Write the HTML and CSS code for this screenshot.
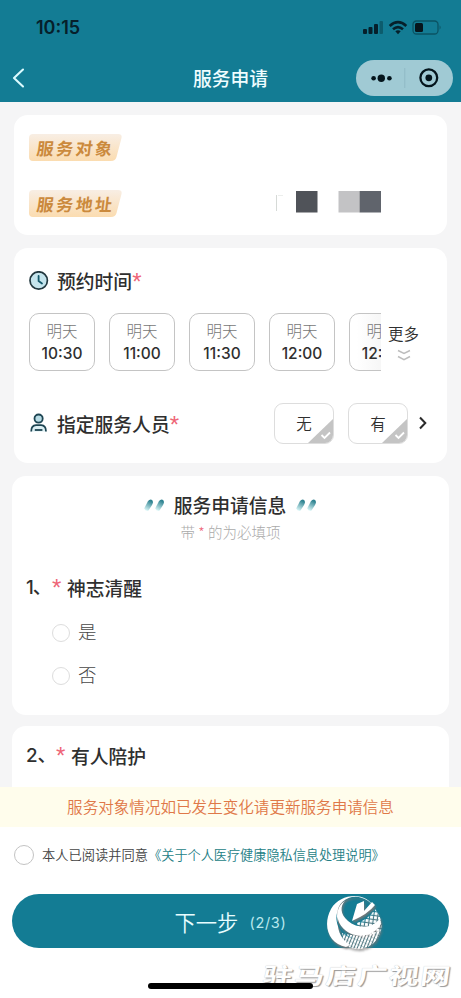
FILE: index.html
```html
<!DOCTYPE html>
<html lang="zh-CN">
<head>
<meta charset="utf-8">
<title>服务申请</title>
<link rel="stylesheet" href="styles.css">
</head>
<body>
<div class="app">
  <header class="header">
    <div class="status">
      <span class="clock">10:15</span>
      <svg class="status-icons" width="80" height="16" viewBox="0 0 80 16">
        <g fill="#06202b"><rect x="1" y="9" width="4" height="5" rx="1"/><rect x="6.5" y="7" width="4" height="7" rx="1"/><rect x="12" y="4" width="4" height="10" rx="1"/></g>
        <rect x="17.5" y="1" width="3.5" height="13" rx="1" fill="#0c5c6d"/>
        <g fill="none" stroke="#06202b" stroke-width="2.6"><path d="M27.7 6 Q36 -1.6 44.3 6"/><path d="M31 9.3 Q36 4.9 41 9.3"/></g>
        <path d="M33.3 11.3 Q36 9.3 38.7 11.3 L36 14.3Z" fill="#06202b"/>
        <rect x="51" y="1" width="25" height="13" rx="3.5" fill="none" stroke="#0b5363" stroke-width="1.3"/>
        <rect x="53" y="3" width="8" height="9" rx="1.5" fill="#06151c"/>
        <path d="M77.6 5.3 Q79.6 7.5 77.6 9.7Z" fill="#0b5363"/>
      </svg>
    </div>
    <div class="nav">
      <svg class="back" width="14" height="20" viewBox="0 0 14 20"><path d="M12 1.500 L3 10 L12 18.500" fill="none" stroke="#dcfbff" stroke-width="2.1" stroke-linecap="round" stroke-linejoin="round"/></svg>
      <h1 class="nav-title">服务申请</h1>
      <div class="capsule">
        <svg width="97" height="36" viewBox="0 0 97 36">
          <g fill="#04151c"><circle cx="17.6" cy="18.3" r="2.3"/><circle cx="25.3" cy="18.3" r="3.7"/><circle cx="33.4" cy="18.3" r="2.3"/><circle cx="72.8" cy="17.8" r="3.4"/></g>
          <circle cx="72.8" cy="17.8" r="8.4" fill="none" stroke="#04151c" stroke-width="2.3"/>
          <path d="M48.8 8v20" stroke="#8fbac5"/>
        </svg>
      </div>
    </div>
  </header>

  <main class="content">
    <section class="card person">
      <div class="info-row"><span class="tag"><svg class="tag-bg" width="94" height="27" viewBox="0 0 94 27"><defs><linearGradient id="tg" x2="0" y2="1"><stop stop-color="#f8eee4"/><stop offset="1" stop-color="#fbdcb0"/></linearGradient></defs><path d="M4 0H89Q93.500 0 92.500 4L87.500 23Q86.500 27 82 27H4Q0 27 0 23V4Q0 0 4 0Z" fill="url(#tg)"/></svg><span class="tag-text">服务对象</span></span></div>
      <div class="info-row"><span class="tag"><svg class="tag-bg" width="94" height="27" viewBox="0 0 94 27"><path d="M4 0H89Q93.500 0 92.500 4L87.500 23Q86.500 27 82 27H4Q0 27 0 23V4Q0 0 4 0Z" fill="url(#tg)"/></svg><span class="tag-text">服务地址</span></span>
        <svg class="mask" width="107" height="24" viewBox="0 0 107 24"><path d="M1.500 4V20" stroke="#d6dad7"/><path d="M3 4.500h5" stroke="#eceeec"/><rect x="21" y="0" width="21.500" height="21.500" fill="#505359"/><rect x="63.500" y="0" width="21.500" height="21.500" fill="#c3c3c5"/><rect x="84.700" y="0" width="21.300" height="21.500" fill="#60646c"/></svg>
      </div>
    </section>

    <section class="card booking">
      <div class="label-row">
        <svg width="20" height="20" viewBox="0 0 20 20"><circle cx="9.700" cy="9.500" r="8.700" fill="#c5e5ed" stroke="#22383f" stroke-width="1.700"/><path d="M9.600 5V10L13 12.500" fill="none" stroke="#14596b" stroke-width="1.800" stroke-linecap="round"/></svg>
        <h2 class="label">预约时间<span class="req">*</span></h2>
      </div>
      <div class="times">
        <div class="slots">
          <div class="slot"><span class="day">明天</span><span class="time">10:30</span></div>
          <div class="slot"><span class="day">明天</span><span class="time">11:00</span></div>
          <div class="slot"><span class="day">明天</span><span class="time">11:30</span></div>
          <div class="slot"><span class="day">明天</span><span class="time">12:00</span></div>
          <div class="slot"><span class="day">明天</span><span class="time">12:30</span></div>
        </div>
        <div class="more"><span>更多</span><svg width="14" height="13" viewBox="0 0 14 13"><path d="M1 1.500L7 4.500L13 1.500M1 7.500L7 10.700L13 7.500" fill="none" stroke="#bdbdbd" stroke-width="1.500"/></svg></div>
      </div>
      <div class="staff">
        <svg width="20" height="20" viewBox="0 0 20 20"><circle cx="9.600" cy="5.600" r="4.100" fill="#b8dce5" stroke="#1d4552" stroke-width="1.800"/><path d="M2.200 18.500Q2.200 12.400 7 12.200H12.200Q17 12.400 17 18.500" fill="#dceff3" stroke="#1d4552" stroke-width="1.800"/><path d="M5.800 17H13.400" stroke="#1d4552" stroke-width="1.800"/></svg>
        <h2 class="label">指定服务人员<span class="req">*</span></h2>
        <div class="choices">
          <div class="choice">无<svg class="corner" width="25" height="24" viewBox="0 0 25 24"><path d="M25 0V24H0Z" fill="#c4c4c4"/><path d="M13.500 16L16.500 19L22 13.500" fill="none" stroke="#fff" stroke-width="1.800"/></svg></div>
          <div class="choice">有<svg class="corner" width="25" height="24" viewBox="0 0 25 24"><path d="M25 0V24H0Z" fill="#c4c4c4"/><path d="M13.500 16L16.500 19L22 13.500" fill="none" stroke="#fff" stroke-width="1.800"/></svg></div>
        </div>
        <svg class="arrow" width="8" height="14" viewBox="0 0 8 14"><path d="M1 1.500L6.300 7L1 12.500" fill="none" stroke="#2b2b2b" stroke-width="2"/></svg>
      </div>
    </section>

    <section class="card wide question-one">
      <div class="section-title">
        <svg width="20" height="13" viewBox="0 0 20 13"><defs><linearGradient id="qg" x1=".7" y1="0" x2=".3" y2="1"><stop offset=".1" stop-color="#2f8391"/><stop offset="1" stop-color="#d9f6f7"/></linearGradient></defs><path d="M4 2Q6.500 -.8 8.500 1.500Q9.500 3.500 8 6L4.500 11.500Q1.500 12.500 .2 9.500Z" fill="url(#qg)"/><path d="M15 2Q17.500 -.8 19.500 1.500Q20.500 3.500 19 6L15.500 11.500Q12.500 12.500 11.200 9.500Z" fill="url(#qg)"/></svg>
        <h2 class="label">服务申请信息</h2>
        <svg width="20" height="13" viewBox="0 0 20 13"><path d="M4 2Q6.500 -.8 8.500 1.500Q9.500 3.500 8 6L4.500 11.500Q1.500 12.500 .2 9.500Z" fill="url(#qg)"/><path d="M15 2Q17.500 -.8 19.500 1.500Q20.500 3.500 19 6L15.500 11.500Q12.500 12.500 11.200 9.500Z" fill="url(#qg)"/></svg>
      </div>
      <p class="hint">带 <span class="star">*</span> 的为必填项</p>
      <h3 class="question"><span class="num one">1、</span><span class="req">*</span>神志清醒</h3>
      <div class="option"><span class="radio"></span><span class="answer">是</span></div>
      <div class="option"><span class="radio"></span><span class="answer">否</span></div>
    </section>

    <section class="card wide question-two">
      <h3 class="question"><span class="num two">2、</span><span class="req">*</span>有人陪护</h3>
    </section>
  </main>

  <footer class="footer">
    <p class="notice">服务对象情况如已发生变化请更新服务申请信息</p>
    <div class="agree"><span class="radio big"></span><span>本人已阅读并同意<span class="link">《关于个人医疗健康隐私信息处理说明》</span></span></div>
    <div class="next"><span>下一步</span><span class="step">(2/3)</span></div>
    <div class="home"></div>
  </footer>

  <svg class="emblem" width="62" height="62" viewBox="0 0 62 62">
    <defs>
      <pattern id="dots" width="4" height="4" patternUnits="userSpaceOnUse" patternTransform="rotate(8)"><rect width="2.900" height="2.900" fill="#fff"/></pattern>
      <pattern id="lines" width="3" height="4" patternUnits="userSpaceOnUse" patternTransform="rotate(22)"><rect width="2" height="3.700" fill="#fff"/></pattern>
    </defs>
    <path d="M50 16Q58 25 56 38L46 42L35 42L32 30Q44 26 50 16Z" fill="url(#dots)"/>
    <path d="M17 40Q35 46 56 37Q52 53 36 56Q25 57 18 50Z" fill="url(#lines)"/>
    <path d="M49 15C43 -1 16 -1 6 16C-3 33 4 51 21 54L25 52C16 47 11 36 13 23C10 11 24 0 37 5C43 7 47 10 49 15Z" fill="#fff"/>
    <path d="M20 8C10 14 11 27 17 34C27 46 47 46 56 31L55 25C49 35 33 37 23 28C15 21 15 13 20 8Z" fill="#fff"/>
    <path d="M12 20C11 31 17 41 27 45C18 43 9 32 12 20Z" fill="#137c94"/>
    <path d="M32 11L39 8V18L47 9L50 12Q43 21 27 28Z" fill="#fff"/>
  </svg>
  <div class="watermark">驻马店广视网</div>
</div>
</body>
</html>
```
FILE: styles.css
```css
* { box-sizing: border-box; }
body { margin: 0; font-family: "Noto Sans CJK SC", sans-serif; color: #2f2f2f; background: #f5f5f6; }
h1, h2, h3, p { margin: 0; font-weight: 500; }
svg { display: block; flex: none; }
.app { position: relative; width: 461px; height: 998px; overflow: hidden; display: flex; flex-direction: column; }

.header { height: 102px; flex: none; background: #137c94; }
.status { height: 54px; padding: 2px 19px 0 36px; display: flex; align-items: center; justify-content: space-between; }
.clock { font: 600 18px/54px Inter, sans-serif; color: #06202b; }
.nav { height: 48px; padding: 0 8px 0 11px; display: grid; grid-template-columns: 97px 1fr 97px; align-items: center; }
.nav-title { font-size: 18.800px; line-height: 30px; color: #effdff; text-align: center; padding-right: 3px; }
.capsule { height: 36px; border-radius: 18px; background: #a0cad4; }

.content { height: 685px; flex: none; padding: 13px 12px 0; overflow: hidden; }
.card { margin: 0 2px 13px; background: #fff; border-radius: 14px; }
.wide { margin: 0 0 11px; }
.person { height: 120px; padding: 19px 15px; }
.info-row { height: 27px; margin-bottom: 29px; display: flex; align-items: center; justify-content: space-between; }
.tag { display: grid; }
.tag > * { grid-area: 1 / 1; }
.tag-text { padding-left: 8px; font-size: 17px; line-height: 27px; font-weight: 700; letter-spacing: 2.400px; color: #cb8a3d; transform: skewX(-7deg); }
.mask { margin-right: 50px; position: relative; top: -1px; }

.booking { height: 215px; padding: 18px 0 0 15px; }
.label-row, .staff { display: flex; align-items: center; }
.label-row { height: 30px; }
.label { margin-left: 8px; font-size: 18.800px; line-height: 30px; white-space: nowrap; }
.req { color: #ee6577; font: 400 24px/1px "Liberation Sans", sans-serif; vertical-align: -1px; }
.star { color: #ee6577; }
.times { display: flex; margin-top: 17px; }
.slots { width: 352px; flex: none; display: flex; gap: 14px; overflow: hidden; }
.slot { width: 66px; height: 58px; flex: none; padding-top: 5px; border: 1px solid #c4c4c4; border-radius: 10px; display: flex; flex-direction: column; align-items: center; }
.slot:last-child { background: linear-gradient(90deg, #fff 10%, #f7f7f7 45%); }
.day { font-size: 15.500px; line-height: 22px; font-weight: 300; color: #777; }
.time { font: 500 15.500px/26px Inter, sans-serif; }
.more { margin-left: 7px; display: flex; flex-direction: column; align-items: center; font-size: 15.500px; line-height: 22px; padding-top: 9px; gap: 5px; }
.more span { font-weight: 350; }
.staff { height: 42px; margin-top: 31px; }
.staff .label { padding-top: 1px; }
.choices { margin-left: auto; display: flex; gap: 14px; }
.choice { position: relative; width: 60px; height: 41px; border: 1px solid #ddd; border-radius: 9px; overflow: hidden; font-size: 15.500px; line-height: 38px; text-align: center; font-weight: 350; }
.corner { position: absolute; right: 0; bottom: 0; }
.arrow { margin: 0 20px 0 11px; }

.question-one { height: 239px; padding-top: 14px; }
.section-title { display: flex; align-items: center; justify-content: center; gap: 10px; padding-right: 1px; }
.section-title .label { margin: 0; }
.hint { font-size: 14.500px; line-height: 24px; font-weight: 300; text-align: center; color: #aaa; }
.question { padding-left: 14px; font-size: 18.800px; line-height: 30px; display: flex; }
.question .req { width: 15px; line-height: 30px; height: 30px; }
.question-one .question { margin: 29px 0 8px; }
.num { font-family: Inter, "Noto Sans CJK SC", sans-serif; white-space: nowrap; }
.num.one { width: 26px; letter-spacing: -1px; }
.num.two { width: 30px; }
.option { height: 43px; padding-left: 40px; display: flex; align-items: center; gap: 8px; font-size: 18.500px; line-height: 28px; color: #484848; font-weight: 300; }
.answer { padding-bottom: 3px; }
.radio { width: 18px; height: 18px; border: 1px solid #ddd; border-radius: 50%; }
.question-two { height: 90px; padding-top: 15px; }

.footer { height: 211px; flex: none; background: #fff; }
.notice { height: 40px; background: #fffdec; color: #df7848; font-size: 15.570px; line-height: 39px; font-weight: 350; text-align: center; }
.agree { height: 56px; padding-left: 14px; display: flex; align-items: center; gap: 8px; font-size: 13.280px; line-height: 20px; color: #444; white-space: nowrap; font-weight: 350; }
.big { width: 20px; height: 20px; border: 1.500px solid #c3c3c3; }
.link { color: #237e85; font-size: 13.150px; }
.next { height: 54px; margin: 11px 12px 0; border-radius: 27px; background: #137c94; color: #e8fdff; font-size: 21.300px; font-weight: 350; display: flex; align-items: center; justify-content: center; gap: 11px; }
.step { font: 400 14.500px/24px Inter, sans-serif; letter-spacing: .7px; padding-top: 3px; color: #b9e9ee; }
.home { position: relative; z-index: 2; width: 165px; height: 6px; margin: 35px 0 0 148px; border-radius: 3px; background: #000; }
.emblem { position: absolute; left: 325px; top: 893px; filter: drop-shadow(1px 2px 1px #777); }
.watermark { position: absolute; left: 263px; top: 954px; font-size: 30px; line-height: 40px; font-weight: 700; letter-spacing: 1.500px; white-space: nowrap; color: #fff; text-shadow: 1.500px 1.500px 1px #999, 0 0 1px #bbb; transform: skewX(-8deg) scaleY(.75); }
```
